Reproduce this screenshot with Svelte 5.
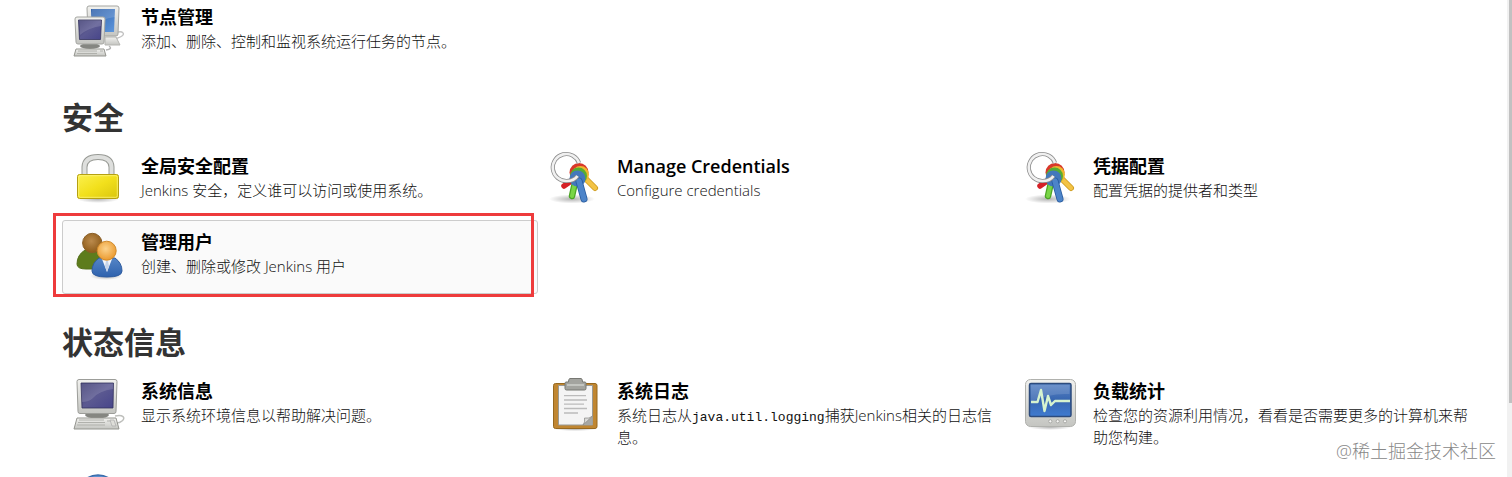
<script>
  const sections = [
    {
      heading: "",
      items: [
        { icon: "nodes", title: "节点管理", desc: "添加、删除、控制和监视系统运行任务的节点。" },
      ],
    },
    {
      heading: "安全",
      items: [
        { icon: "lock", title: "全局安全配置", desc: "Jenkins 安全，定义谁可以访问或使用系统。" },
        { icon: "keys", title: "Manage Credentials", desc: "Configure credentials" },
        { icon: "keys", title: "凭据配置", desc: "配置凭据的提供者和类型" },
        { icon: "users", title: "管理用户", desc: "创建、删除或修改 Jenkins 用户", active: true },
      ],
    },
    {
      heading: "状态信息",
      items: [
        { icon: "computer", title: "系统信息", desc: "显示系统环境信息以帮助解决问题。" },
        { icon: "clipboard", title: "系统日志", desc: "系统日志从", code: "java.util.logging", rest: "捕获Jenkins相关的日志信息。" },
        { icon: "monitor", title: "负载统计", desc: "检查您的资源利用情况，看看是否需要更多的计算机来帮助您构建。" },
        { icon: "help" },
      ],
    },
  ];
</script>

<!-- shared gradients -->
<svg class="defs" width="0" height="0" aria-hidden="true">
  <defs>
    <linearGradient id="metal" x1="0" y1="0" x2="0" y2="1">
      <stop offset="0" stop-color="#f1f1ee" /><stop offset="1" stop-color="#c4c5c1" />
    </linearGradient>
    <linearGradient id="navy" x1="0" y1="0" x2="1" y2="1">
      <stop offset="0" stop-color="#3c3a72" /><stop offset="0.5" stop-color="#5b5991" /><stop offset="1" stop-color="#47458a" />
    </linearGradient>
    <linearGradient id="sky" x1="0" y1="0" x2="1" y2="1">
      <stop offset="0" stop-color="#2d5ea8" /><stop offset="1" stop-color="#5e97dd" />
    </linearGradient>
    <linearGradient id="gold" x1="0" y1="0" x2="1" y2="1">
      <stop offset="0" stop-color="#fbf04e" /><stop offset="0.5" stop-color="#f2e01c" /><stop offset="1" stop-color="#d9c50e" />
    </linearGradient>
    <linearGradient id="scope" x1="0" y1="0" x2="0" y2="1">
      <stop offset="0" stop-color="#5a84c4" /><stop offset="0.5" stop-color="#3766b0" /><stop offset="1" stop-color="#3f7bd0" />
    </linearGradient>
    <linearGradient id="jacket" x1="0" y1="0" x2="0" y2="1">
      <stop offset="0" stop-color="#5585c6" /><stop offset="1" stop-color="#2e62ae" />
    </linearGradient>
    <radialGradient id="face" cx="0.45" cy="0.4" r="0.6">
      <stop offset="0" stop-color="#fbd28c" /><stop offset="1" stop-color="#eb9a2f" />
    </radialGradient>
    <radialGradient id="brown" cx="0.45" cy="0.4" r="0.6">
      <stop offset="0" stop-color="#bb8a4c" /><stop offset="1" stop-color="#8d5b19" />
    </radialGradient>
    <radialGradient id="shade">
      <stop offset="0" stop-color="#000" stop-opacity="0.3" /><stop offset="1" stop-color="#000" stop-opacity="0" />
    </radialGradient>
  </defs>
</svg>

{#snippet glyph(name)}
  <svg class="icon" viewBox="0 0 52 52" aria-hidden="true">
    {#if name === "nodes"}
      <path d="M46 27c5-1 7 2 4 4s-6 2-8 4" fill="none" stroke="#c3c3c3" stroke-width="1.4" />
      <path d="M33 32h11l4 8H33z" fill="url(#metal)" stroke="#b4b4b0" />
      <path d="M17 1h28q2 0 2 2l-1 26q0 2-2 2H18q-2 0-2-2L15 3q0-2 2-2z" fill="url(#metal)" stroke="#a4a5a1" />
      <path d="M19 4h24l-1 23H20z" fill="url(#sky)" />
      <path d="M20 4h23v8q-14 2-23 9z" fill="#fff" opacity="0.15" />
      <path d="M34 45q7-1 3-4" fill="none" stroke="#b5b5b5" stroke-width="1.4" />
      <ellipse cx="18" cy="41" rx="10" ry="3" fill="#858681" />
      <path d="M5 12h26q2 0 2 2l-1 23q0 2-2 2H6q-2 0-2-2L3 14q0-2 2-2z" fill="url(#metal)" stroke="#a4a5a1" />
      <path d="M6.500 15h23l-1 19.500h-21z" fill="url(#navy)" stroke="#33325d" stroke-width="0.8" />
      <path d="M7 15h22v6q-13 2-21 9z" fill="#fff" opacity="0.14" />
      <path d="M4 44h28l2 7H2z" fill="url(#metal)" stroke="#94958f" />
      <path d="M6 46h19M5 48.500h20M28 46h3" stroke="#b0b1ac" />
    {:else if name === "lock"}
      <ellipse cx="26" cy="45" rx="21" ry="4" fill="url(#shade)" />
      <path d="M12.500 22V13Q13 3 26 3t13.500 10v9" fill="none" stroke="#999b96" stroke-width="6" />
      <path d="M12.500 22V13Q13 3 26 3t13.500 10v9" fill="none" stroke="#dedfdd" stroke-width="4" />
      <rect x="5.500" y="20.500" width="41" height="24" rx="2" fill="url(#gold)" stroke="#b5a011" />
      <rect x="6.700" y="21.700" width="38.600" height="21.600" rx="1.500" fill="none" stroke="#fff684" opacity="0.7" />
    {:else if name === "keys"}
      <ellipse cx="24" cy="45" rx="23" ry="4.500" fill="url(#shade)" />
      <path d="M33 20 47 34" stroke="#cf9d23" stroke-width="6" stroke-linecap="round" />
      <path d="M33 20 47 34" stroke="#f3c345" stroke-width="4.200" stroke-linecap="round" />
      <path d="M26 25 16 32" stroke="#d52127" stroke-width="5.500" stroke-linecap="round" />
      <path d="M28 24 24 42" stroke="#4ca526" stroke-width="6.500" stroke-linecap="round" />
      <path d="M28 24 24 42" stroke="#79d646" stroke-width="4" stroke-linecap="round" />
      <circle cx="31" cy="18.500" r="9.500" fill="#d9382a" />
      <circle cx="32.500" cy="20.500" r="8.500" fill="#edb72e" />
      <circle cx="30.500" cy="22" r="8.500" fill="#56ad32" />
      <circle cx="29.500" cy="24.500" r="8" fill="#4378bb" />
      <path d="m31 27 5 18" stroke="#285b9e" stroke-width="7" stroke-linecap="round" />
      <path d="m31 27 5 18" stroke="#4c84c9" stroke-width="5.400" stroke-linecap="round" />
      <path d="M29.500 22Q26 27 18.700 27A13.500 13.500 0 1 1 31 9" fill="none" stroke="#8d8d8d" stroke-width="4.200" />
      <path d="M29.500 22Q26 27 18.700 27A13.500 13.500 0 1 1 31 9" fill="none" stroke="#f0f0f0" stroke-width="2.600" />
    {:else if name === "users"}
      <ellipse cx="34" cy="46" rx="16" ry="4" fill="url(#shade)" />
      <path d="M13 20Q5 25 5 34q0 5 9 5h17V24l-6-5z" fill="#5d7c1c" stroke="#55701a" />
      <circle cx="20.300" cy="13" r="9.700" fill="url(#brown)" stroke="#8a5e26" />
      <path d="M27 28q-7 5-7 13 0 6 15 6t15-6q0-8-7-13z" fill="url(#jacket)" stroke="#2f5c9f" />
      <path d="m30 29 5 13 5-13z" fill="#f4f6fa" />
      <path d="m34 31-1 5 2 6 2-6-1-5z" fill="#c6d4e9" />
      <circle cx="34.700" cy="20.700" r="9.500" fill="url(#face)" stroke="#d08a2b" />
    {:else if name === "computer"}
      <path d="M43 37c8-2 11 2 7 5-2 2-5 2-6 2" fill="none" stroke="#bebfbc" stroke-width="1.500" />
      <ellipse cx="25" cy="36" rx="12" ry="3.500" fill="#858681" />
      <path d="M7 .5h36q2 0 2 2l-1 30q0 2-2 2H8q-2 0-2-2L5 2.500q0-2 2-2z" fill="url(#metal)" stroke="#9c9d99" />
      <path d="M9 4h32.500L41 29H10z" fill="url(#navy)" stroke="#33325d" stroke-width="0.800" />
      <path d="M9.500 4.500h31.700V10Q27 12 21 19q-4 4-11 4z" fill="#fff" opacity="0.14" />
      <path d="M5 39h39l3 11H2z" fill="url(#metal)" stroke="#94958f" />
      <path d="M7 41h25M6 43.500h27M5 46h28M35 42h6" stroke="#b0b1ac" />
      <path d="m38 41 4 0 2 6h-4z" fill="#deded9" stroke="#aaa" stroke-width="0.700" />
    {:else if name === "clipboard"}
      <ellipse cx="27" cy="50" rx="22" ry="2" fill="url(#shade)" />
      <rect x="5.500" y="4.500" width="43.500" height="45" rx="2" fill="#c08631" stroke="#96681f" />
      <path d="M10.500 6.500h34v39.500h-34z" fill="#f4f4f4" stroke="#999993" />
      <path d="M44.500 37v9h-10q2.500-2 2-7 5 1 8-2z" fill="#a6a7a4" />
      <path d="M44.500 37 35 46q2.500-3 1.500-7 5 1 8-2z" fill="#dcdcda" stroke="#8c8d89" stroke-width="0.700" />
      <path d="M16 16.700h22M16 21h23M16 25.200h20M16 29.500h23M16 34h14" stroke="#bbb" stroke-width="1.300" />
      <path d="M22-.5h11q1.500 0 1.500 3.500H37q1 0 1 1.500V9.500q0 1.500-1.500 1.500h-18Q17 11 17 9.500V4.500Q17 3 18 3h2.500q0-3.500 1.500-3.500z" fill="#a3a49f" stroke="#777873" />
      <path d="M19 6h17" stroke="#ced0cb" stroke-width="1.500" />
    {:else if name === "monitor"}
      <ellipse cx="26" cy="48" rx="22" ry="3" fill="url(#shade)" />
      <rect x="1.500" y=".5" width="50" height="47" rx="5" fill="url(#metal)" stroke="#b0b1ad" />
      <rect x="5.500" y="4.500" width="41.500" height="33" rx="1.500" fill="url(#scope)" stroke="#2d4b7c" stroke-width="1.500" />
      <path d="M7 6h38.500v9Q25 14 7 23z" fill="#fff" opacity="0.13" />
      <path d="M7 23h6.500L17 11l3.500 21L24 17l3 9 4-4h15" fill="none" stroke="#d6f3cf" stroke-width="2.400" stroke-linejoin="round" />
      <g fill="#f6f6f4" stroke="#9c9d99" stroke-width="0.800">
        <circle cx="26.300" cy="42.300" r="1.600" /><circle cx="33.700" cy="42.300" r="1.600" /><circle cx="41" cy="42.300" r="1.600" />
      </g>
    {:else}
      <circle cx="26" cy="25.500" r="20.500" fill="#5c90cf" stroke="#396cab" stroke-width="1.500" />
    {/if}
  </svg>
{/snippet}

<div class="page">
  <main>
    {#each sections as section}
      <section>
        {#if section.heading}
          <h2>{section.heading}</h2>
        {/if}
        <div class="items">
          {#each section.items as item}
            {#if item.title}
              <a href="#top" class="item" class:active={item.active}>
                {@render glyph(item.icon)}
                <dl>
                  <dt>{item.title}</dt>
                  <dd>{item.desc}{#if item.code}<code>{item.code}</code>{item.rest}{/if}</dd>
                </dl>
                {#if item.active}
                  <span class="marker"></span>
                {/if}
              </a>
            {:else}
              <div class="item">{@render glyph(item.icon)}</div>
            {/if}
          {/each}
        </div>
      </section>
    {/each}
  </main>
  <div class="scroll-track"><div class="scroll-thumb"></div></div>
  <div class="watermark">@稀土掘金技术社区</div>
</div>

<style>
:global(body) {
  margin: 0;
  background: #fff;
}

.defs {
  position: absolute;
}

.page {
  position: relative;
  display: flex;
  height: 100vh;
  overflow: hidden;
  font-family: "Open Sans", "Noto Sans CJK SC", sans-serif;
  color: #333;
}

main {
  flex: 1;
  min-width: 0;
  margin: -5px 17px 0 62px;
}

section {
  margin-bottom: 31px;
}

h2 {
  margin: 0 0 9px;
  font-size: 31px;
  line-height: 35px;
  font-weight: 700;
}

.items {
  display: grid;
  grid-template-columns: repeat(3, 1fr);
  row-gap: 2px;
}

.item {
  position: relative;
  display: flex;
  align-items: flex-start;
  gap: 17px;
  min-height: 74px;
  padding: 9px;
  box-sizing: border-box;
  border: 1px solid transparent;
  border-radius: 3px;
  color: inherit;
  text-decoration: none;
}

.item.active {
  background: #fafafa;
  border-color: #ccc;
}

.icon {
  flex: none;
  width: 52px;
  height: 52px;
  overflow: visible;
}

dl {
  flex: 1;
  margin: 0;
}

dt {
  font-size: 18px;
  line-height: 25px;
  font-weight: 600;
  color: #000;
}

dd {
  margin: 0;
  font-size: 15px;
  line-height: 22px;
  font-weight: 300;
  color: #111;
}

code {
  font-family: "Liberation Mono", monospace;
  font-size: 13px;
  line-height: 1;
}

/* red frame drawn over the highlighted entry */
.marker {
  position: absolute;
  top: -8px;
  right: 3px;
  bottom: -4px;
  left: -10px;
  border: 3px solid #ee3b3c;
}

.scroll-track {
  flex: none;
  width: 5px;
  padding-left: 2px;
  box-sizing: border-box;
  background: #f1f1f1;
}

.scroll-thumb {
  height: 84.5%;
  background: #c1c1c1;
}

.watermark {
  position: absolute;
  right: 16px;
  bottom: 14px;
  font-size: 18px;
  line-height: 24px;
  font-weight: 300;
  color: #888;
}
</style>
